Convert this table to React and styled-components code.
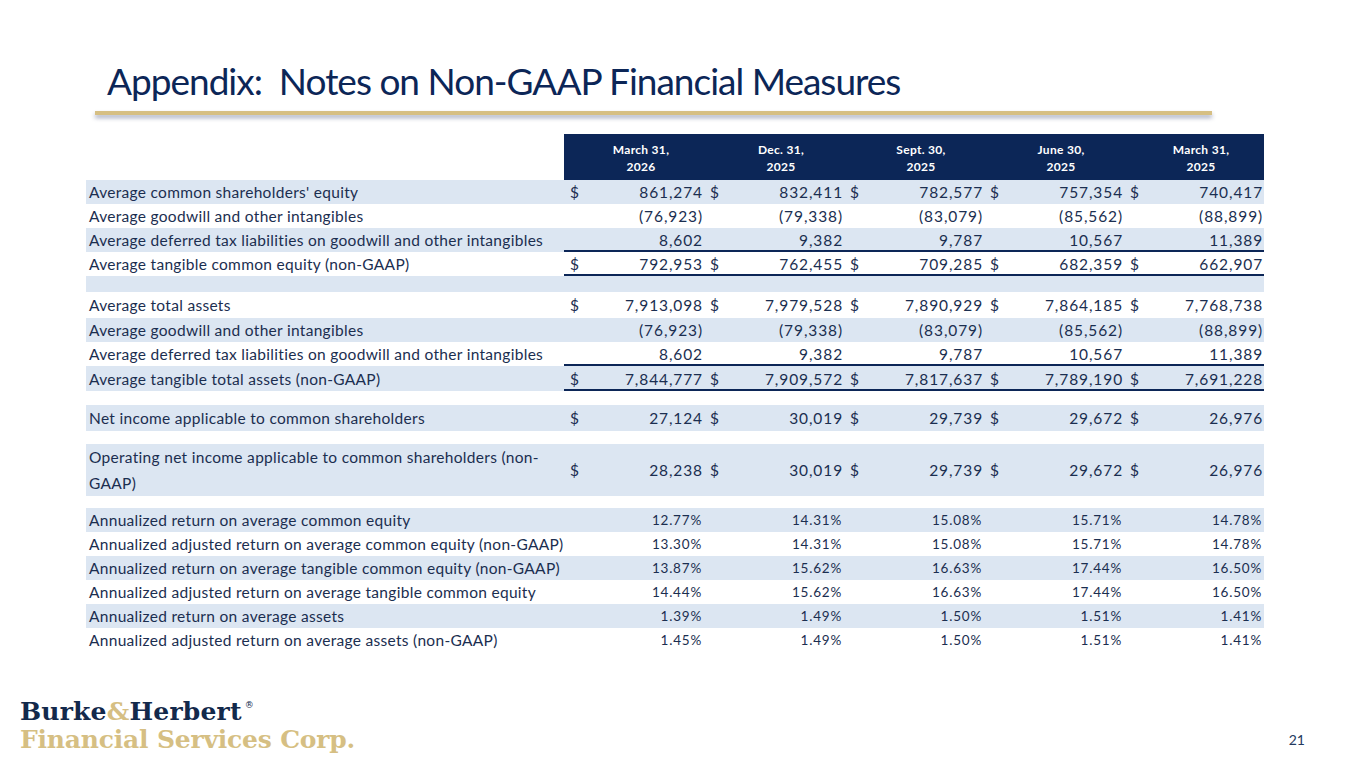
import React from 'react'
import styled, { createGlobalStyle } from 'styled-components'

const GlobalStyle = createGlobalStyle`
  html, body { margin: 0; padding: 0; background: #fff; }
  body { font-family: Lato, "Open Sans", sans-serif; }
`

const NAVY = '#0c2657'
const INK = '#1b2e50'
const GOLD = '#d6bf83'
const SHADE = '#dce6f2'

const columns = [
  ['March 31,', '2026'],
  ['Dec. 31,', '2025'],
  ['Sept. 30,', '2025'],
  ['June 30,', '2025'],
  ['March 31,', '2025'],
]

// kind: money | pct | gap
const rows = [
  { kind: 'money', label: "Average common shareholders' equity", shade: true, dollar: true, h: 24, values: ['861,274', '832,411', '782,577', '757,354', '740,417'] },
  { kind: 'money', label: 'Average goodwill and other intangibles', h: 24, values: ['(76,923)', '(79,338)', '(83,079)', '(85,562)', '(88,899)'] },
  { kind: 'money', label: 'Average deferred tax liabilities on goodwill and other intangibles', shade: true, rule: true, h: 24, values: ['8,602', '9,382', '9,787', '10,567', '11,389'] },
  { kind: 'money', label: 'Average tangible common equity (non-GAAP)', dollar: true, rule: true, h: 24, values: ['792,953', '762,455', '709,285', '682,359', '662,907'] },
  { kind: 'gap', shade: true, h: 16 },
  { kind: 'money', label: 'Average total assets', dollar: true, h: 26, values: ['7,913,098', '7,979,528', '7,890,929', '7,864,185', '7,768,738'] },
  { kind: 'money', label: 'Average goodwill and other intangibles', shade: true, h: 24, values: ['(76,923)', '(79,338)', '(83,079)', '(85,562)', '(88,899)'] },
  { kind: 'money', label: 'Average deferred tax liabilities on goodwill and other intangibles', rule: true, h: 24, values: ['8,602', '9,382', '9,787', '10,567', '11,389'] },
  { kind: 'money', label: 'Average tangible total assets (non-GAAP)', shade: true, dollar: true, rule: true, h: 25, values: ['7,844,777', '7,909,572', '7,817,637', '7,789,190', '7,691,228'] },
  { kind: 'gap', h: 14 },
  { kind: 'money', label: 'Net income applicable to common shareholders', shade: true, dollar: true, h: 26, values: ['27,124', '30,019', '29,739', '29,672', '26,976'] },
  { kind: 'gap', h: 13 },
  { kind: 'money', label: 'Operating net income applicable to common shareholders (non-GAAP)', shade: true, dollar: true, h: 50, values: ['28,238', '30,019', '29,739', '29,672', '26,976'] },
  { kind: 'gap', h: 12 },
  { kind: 'pct', label: 'Annualized return on average common equity', shade: true, h: 24, values: ['12.77%', '14.31%', '15.08%', '15.71%', '14.78%'] },
  { kind: 'pct', label: 'Annualized adjusted return on average common equity (non-GAAP)', h: 24, values: ['13.30%', '14.31%', '15.08%', '15.71%', '14.78%'] },
  { kind: 'pct', label: 'Annualized return on average tangible common equity (non-GAAP)', shade: true, h: 24, values: ['13.87%', '15.62%', '16.63%', '17.44%', '16.50%'] },
  { kind: 'pct', label: 'Annualized adjusted return on average tangible common equity', h: 24, values: ['14.44%', '15.62%', '16.63%', '17.44%', '16.50%'] },
  { kind: 'pct', label: 'Annualized return on average assets', shade: true, h: 24, values: ['1.39%', '1.49%', '1.50%', '1.51%', '1.41%'] },
  { kind: 'pct', label: 'Annualized adjusted return on average assets (non-GAAP)', h: 24, values: ['1.45%', '1.49%', '1.50%', '1.51%', '1.41%'] },
]

export default function App() {
  return (
    <>
      <GlobalStyle />
      <Page>
        <TitleBlock>
          <Title>Appendix:&nbsp; Notes on Non-GAAP Financial Measures</Title>
          <TitleRule />
        </TitleBlock>

        <Table>
          <colgroup>
            <col style={{ width: 478 }} />
            {columns.map((_, i) => (
              <React.Fragment key={i}>
                <col style={{ width: 26 }} />
                <col style={{ width: 114 }} />
              </React.Fragment>
            ))}
          </colgroup>
          <thead>
            <tr>
              <BlankHead />
              {columns.map((c, i) => (
                <HeadCell key={i} colSpan={2}>
                  {c[0]}
                  <br />
                  {c[1]}
                </HeadCell>
              ))}
            </tr>
          </thead>
          <tbody>
            {rows.map((r, i) => {
              if (r.kind === 'gap') {
                return (
                  <Row key={i} $shade={r.shade} $h={r.h}>
                    <td colSpan={11} />
                  </Row>
                )
              }
              return (
                <Row key={i} $shade={r.shade} $h={r.h}>
                  <Label $wrap={r.h > 30}>{r.label}</Label>
                  {r.values.map((v, j) =>
                    r.kind === 'pct' ? (
                      <Pct key={j} colSpan={2}>{v}</Pct>
                    ) : (
                      <React.Fragment key={j}>
                        <Dollar $rule={r.rule}>{r.dollar ? '$' : ''}</Dollar>
                        <Amount $rule={r.rule}>{v}</Amount>
                      </React.Fragment>
                    )
                  )}
                </Row>
              )
            })}
          </tbody>
        </Table>

        <Footer>
          <Logo>
            <LogoTop>
              Burke<Amp>&amp;</Amp>Herbert<Reg>®</Reg>
            </LogoTop>
            <LogoBottom>Financial Services Corp.</LogoBottom>
          </Logo>
          <PageNum>21</PageNum>
        </Footer>
      </Page>
    </>
  )
}

const Page = styled.div`
  width: 1365px;
  height: 768px;
  display: flex;
  flex-direction: column;
  background: #fff;
  overflow: hidden;
`

const TitleBlock = styled.div`
  padding-top: 57px;
`

const Title = styled.h1`
  margin: 0 0 0 107px;
  font-family: Lato, sans-serif;
  font-weight: 400;
  font-size: 37px;
  letter-spacing: -1px;
  line-height: 48px;
  color: ${NAVY};
  white-space: nowrap;
`

const TitleRule = styled.div`
  margin: 6px 0 0 95px;
  width: 1117px;
  height: 4px;
  background: ${GOLD};
  box-shadow: 0 3px 4px rgba(60, 72, 115, 0.45);
`

const Table = styled.table`
  margin: 19px 0 0 86px;
  width: 1178px;
  table-layout: fixed;
  border-collapse: collapse;
  border-spacing: 0;
  font-family: Lato, sans-serif;
  color: ${INK};
`

const BlankHead = styled.th`
  background: #fff;
  height: 46px;
  padding: 0;
`

const HeadCell = styled.th`
  background: ${NAVY};
  color: #fff;
  font-size: 12px;
  letter-spacing: 0.3px;
  font-weight: 700;
  line-height: 17px;
  text-align: center;
  padding: 2px 0 0 14px;
  vertical-align: middle;
`

const Row = styled.tr`
  height: ${(p) => p.$h}px;
  background: ${(p) => (p.$shade ? SHADE : '#fff')};
  & > td {
    padding: 0;
    height: ${(p) => p.$h}px;
  }
`

const Label = styled.td`
  font-size: 15.5px;
  letter-spacing: 0.3px;
  line-height: ${(p) => (p.$wrap ? '26px' : '20px')};
  padding-left: 3px !important;
  white-space: ${(p) => (p.$wrap ? 'normal' : 'nowrap')};
  padding-right: 8px !important;
`

const Dollar = styled.td`
  font-size: 15.5px;
  padding-left: 6px !important;
  box-shadow: ${(p) => (p.$rule ? `inset 0 -2px 0 ${NAVY}` : 'none')};
`

const Amount = styled.td`
  font-size: 15.5px;
  letter-spacing: 0.9px;
  text-align: right;
  padding-right: 1px !important;
  box-shadow: ${(p) => (p.$rule ? `inset 0 -2px 0 ${NAVY}` : 'none')};
`

const Pct = styled.td`
  font-size: 13.5px;
  letter-spacing: 0.8px;
  text-align: right;
  padding-right: 2px !important;
`

const Footer = styled.footer`
  margin-top: auto;
  display: flex;
  align-items: flex-end;
  justify-content: space-between;
  padding: 0 60px 14px 20px;
`

const Logo = styled.div`
  font-family: "DejaVu Serif", serif;
  font-weight: 700;
  font-size: 25px;
  line-height: 28px;
  letter-spacing: -0.2px;
`

const LogoTop = styled.div`
  color: #13294b;
  letter-spacing: 0.2px;
`

const Amp = styled.span`
  color: ${GOLD};
`

const Reg = styled.sup`
  font-size: 9px;
  font-weight: 400;
  line-height: 0;
  vertical-align: 12px;
  margin-left: 3px;
`

const LogoBottom = styled.div`
  color: ${GOLD};
`

const PageNum = styled.div`
  font-family: Lato, sans-serif;
  font-size: 14px;
  line-height: 18px;
  color: #243a5e;
  margin-bottom: 5px;
`
